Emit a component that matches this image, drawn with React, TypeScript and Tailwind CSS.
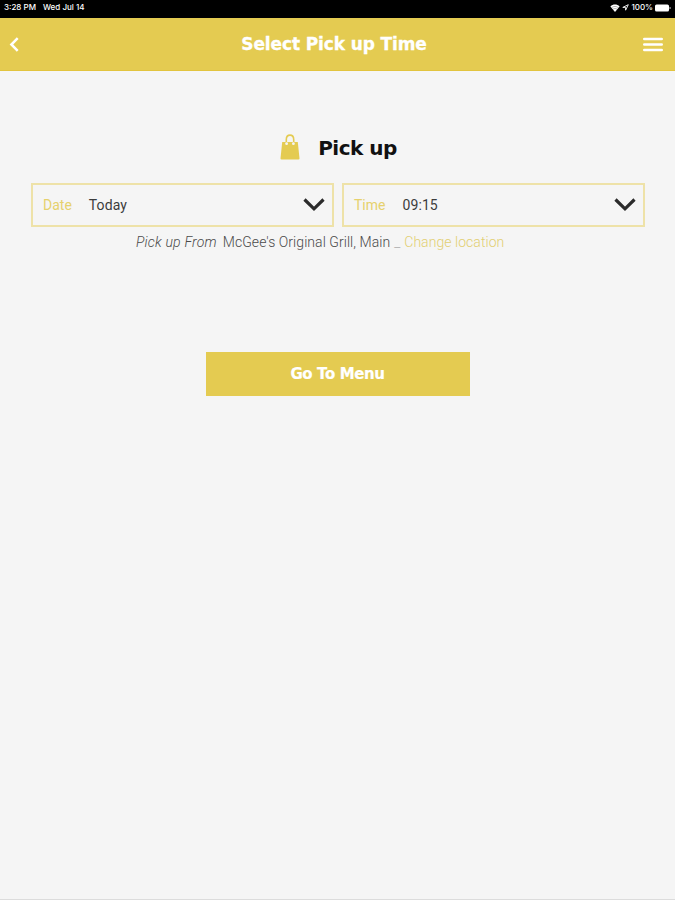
import { FunctionComponent } from "react";

const YELLOW = "#e4cb51";

const Wifi = () => (
  <svg width="10" height="8" viewBox="0 0 10 8" fill="white">
    <path d="M5 8 0.4 2.4C3 -0.2 7 -0.2 9.6 2.4Z" />
    <path d="M1.5 3.8C3.5 2 6.5 2 8.5 3.8M2.8 5.4C4.2 4.2 5.8 4.2 7.2 5.4" stroke="black" strokeWidth=".3" fill="none" />
  </svg>
);

const StatusBar = () => (
  <div className="flex h-[18px] items-start justify-between bg-black pt-[2px] pl-[4px] pr-[4px] font-['Inter',sans-serif] text-[8px] leading-[11px] font-medium text-white">
    <div className="flex gap-[7px]">
      <span>3:28 PM</span>
      <span>Wed Jul 14</span>
    </div>
    <div className="flex h-[11px] items-center">
      <Wifi />
      <svg className="ml-[2px]" width="7" height="7" viewBox="0 0 7 7" fill="none" stroke="white" strokeWidth=".9">
        <path d="M6.3.7.8 3.4h2.8v2.8Z" />
      </svg>
      <span className="ml-[2px]">100%</span>
      <svg className="ml-[2px]" width="16" height="8" viewBox="0 0 16 8" fill="white">
        <rect x="0" y="0.5" width="14" height="7" rx="1.6" />
        <path d="M14.6 2.8q1 .2 1 1.2t-1 1.2Z" />
      </svg>
    </div>
  </div>
);

const Header = () => (
  <header className="flex h-[53px] items-center justify-between border-b border-[#e2c43e] bg-[#e4cb51] pr-[12px] pl-[9px]">
    <button aria-label="Back">
      <svg width="10" height="15" viewBox="0 0 10 15" fill="none" stroke="white" strokeWidth="2.5">
        <path d="M8.7 1.2 2.4 7.5l6.3 6.3" />
      </svg>
    </button>
    <h1 className="ml-[6px] font-['DejaVu_Sans',sans-serif] text-[17px] leading-[20px] font-bold tracking-[-0.12px] whitespace-nowrap text-white [-webkit-text-stroke:0.3px_white]">
      Select Pick up Time
    </h1>
    <button aria-label="Menu">
      <svg width="20" height="15" viewBox="0 0 20 15" stroke="white" strokeWidth="2.6" strokeLinecap="round">
        <path d="M1.3 2h17.4M1.3 7.5h17.4M1.3 13h17.4" />
      </svg>
    </button>
  </header>
);

const Bag = () => (
  <svg className="mb-[3px]" width="20" height="26" viewBox="0 0 20 26">
    <path d="M2.2 8h15.6l1.7 16.5q0 1-1 1h-17q-1 0-1-1Z" fill={YELLOW} />
    <path d="M6.3 9V5.5C6.3-.3 13.7-.3 13.7 5.5V9" fill="none" stroke={YELLOW} strokeWidth="1.6" />
    <circle cx="6.6" cy="9.7" r="1.4" fill="#f5f5f5" />
    <circle cx="13.4" cy="9.7" r="1.4" fill="#f5f5f5" />
  </svg>
);

const SelectBox: FunctionComponent<{ label: string; value: string }> = ({ label, value }) => (
  <button className="flex h-[44px] flex-1 items-center border-2 border-[#eee2a8] bg-[#f5f5f5] pr-[7px] pl-[10px] text-left text-[14px]">
    <span className="text-[#e6d16d]">{label}</span>
    <span className="ml-[17px] flex-1 tracking-[0.1px] text-[#3c3c3c]">{value}</span>
    <svg width="22" height="14" viewBox="0 0 22 14" fill="none" stroke="#2b2b2b" strokeWidth="3.2">
      <path d="m1.5 1.5 9.5 9.3 9.5-9.3" />
    </svg>
  </button>
);

const App = () => {
  return (
    <div className="flex h-screen flex-col border-b border-[#dcdcdc] bg-[#f5f5f5] font-['Roboto',sans-serif]">
      <StatusBar />
      <Header />
      <main className="flex flex-col pt-[64px]">
        <div className="flex h-[27px] items-center justify-center gap-[18px] pl-[2px]">
          <Bag />
          <h2 className="font-['DejaVu_Sans',sans-serif] text-[20px] leading-[27px] font-bold tracking-[-0.5px] text-[#111]">
            Pick up
          </h2>
        </div>
        <div className="mt-[21px] flex gap-[8px] pr-[30px] pl-[31px]">
          <SelectBox label="Date" value="Today" />
          <SelectBox label="Time" value="09:15" />
        </div>
        <div className="mt-[5px] flex pl-[136px] text-[14px] leading-[20px] font-light tracking-[0.05px] whitespace-nowrap text-[#4a4a4a]">
          <em className="tracking-[0.2px]">Pick up From</em>
          <span className="ml-[6px]">McGee's Original Grill, Main</span>
          <span className="ml-[4px] text-[#aaa]">_</span>
          <a className="ml-[4px] text-[#e2cf72]">Change location</a>
        </div>
        <button className="mt-[100px] h-[44px] w-[264px] self-center bg-[#e4cb51] pt-px font-['DejaVu_Sans',sans-serif] text-[15px] font-bold tracking-[-0.4px] text-white [-webkit-text-stroke:0.2px_white]">
          Go To Menu
        </button>
      </main>
    </div>
  );
};

export default App;
